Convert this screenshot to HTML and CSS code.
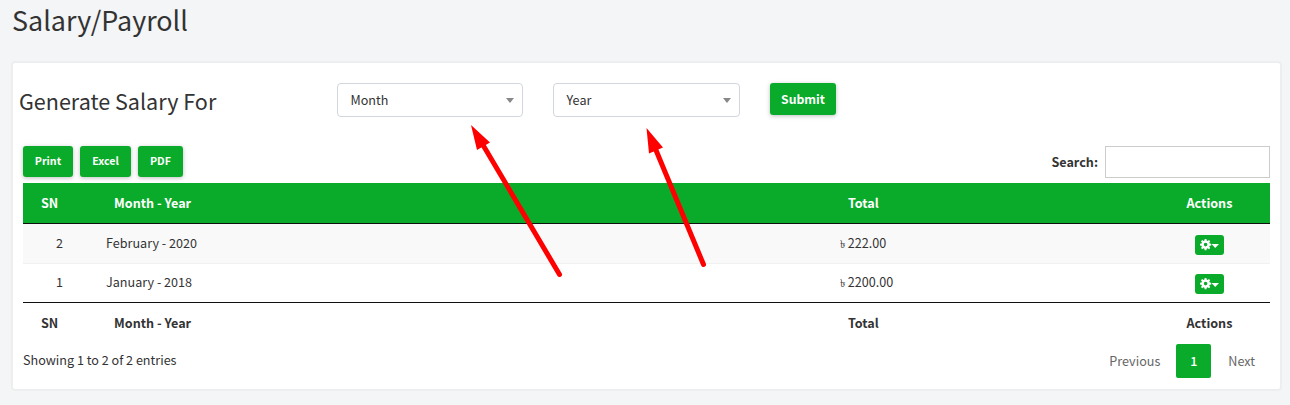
FILE: index.html
```html
<!DOCTYPE html>
<html lang="en">
<head>
<meta charset="utf-8">
<title>Salary/Payroll</title>
<link rel="stylesheet" href="styles.css">
</head>
<body>
<svg class="defs" aria-hidden="true">
  <symbol id="actions" viewBox="0 0 20 12">
    <path fill-rule="evenodd" d="M4.700 0h1.700l.3 1.600 1 .4L9 1.100l1.200 1.200-.9 1.300.4 1 1.500.2v1.700l-1.500.3-.4 1 .9 1.200L9 10.200l-1.300-.9-1 .4-.3 1.500H4.700l-.3-1.500-1-.4-1.200.9L1 9l.9-1.200-.4-1L0 6.500V4.800l1.500-.2.4-1L1 2.300l1.200-1.200 1.200.9 1-.4zM5.600 3.800a1.800 1.800 0 1 0 0 3.600 1.800 1.800 0 1 0 0-3.600z"/>
    <path d="M11.500 5h7.500L15.200 9z"/>
  </symbol>
</svg>
<h1 class="title">Salary/Payroll</h1>
<main class="card">
  <form class="generate">
    <h2 class="subtitle">Generate Salary For</h2>
    <div class="select month"><span>Month</span><i class="arrow"></i></div>
    <div class="select year"><span>Year</span><i class="arrow"></i></div>
    <button class="btn submit" type="button">Submit</button>
  </form>
  <div class="toolbar">
    <button class="btn print">Print</button>
    <button class="btn excel">Excel</button>
    <button class="btn pdf">PDF</button>
    <label class="search"><span>Search:</span><input type="text"></label>
  </div>
  <div class="table">
    <div class="row head"><b>SN</b><b>Month - Year</b><b>Total</b><b>Actions</b></div>
    <div class="row striped"><span class="sn">2</span><span>February - 2020</span><span><span class="taka">৳</span> 222.00</span><span class="act"><button class="gear"><svg><use href="#actions"/></svg></button></span></div>
    <div class="row last"><span class="sn">1</span><span>January - 2018</span><span><span class="taka">৳</span> 2200.00</span><span class="act"><button class="gear"><svg><use href="#actions"/></svg></button></span></div>
    <div class="row foot"><b>SN</b><b>Month - Year</b><b>Total</b><b>Actions</b></div>
  </div>
  <div class="bottom">
    <span class="info">Showing 1 to 2 of 2 entries</span>
    <nav class="pager"><span>Previous</span><span class="current">1</span><span>Next</span></nav>
  </div>
</main>
<svg class="arrows" viewBox="0 0 1290 405" fill="#f00" stroke="#f00" stroke-linecap="round">
  <path d="M559.5 274.5 483 145M703.5 264.5 655.5 149" stroke-width="5"/>
  <path stroke="none" d="M471 125 490 142.500 477 150zM646.500 128 663 147.500 649 153.500z"/>
</svg>
</body>
</html>
```
FILE: styles.css
```css
* { box-sizing: border-box; }
body {
  margin: 0;
  height: 405px;
  overflow: hidden;
  background: #f3f5f7;
  color: #333;
  font: 12.6px/20px "Noto Sans CJK SC", "Noto Sans", sans-serif;
}
.defs { position: absolute; width: 0; height: 0; }
.title {
  margin: 0;
  height: 61px;
  padding: 3px 0 0 12px;
  font-size: 26.9px;
  line-height: 34px;
  font-weight: 400;
}
.card {
  width: 1271px;
  height: 330px;
  margin-left: 11px;
  padding: 20px 10px 0;
  background: #fff;
  border: 2px solid #edeef0;
  border-radius: 4px;
}
.generate { display: flex; height: 63px; }
.subtitle {
  width: 314px;
  margin: 2px 0 0 -4px;
  font-size: 21.55px;
  line-height: 32px;
  font-weight: 400;
}
.select {
  display: flex;
  align-items: center;
  justify-content: space-between;
  height: 34px;
  margin-left: 4px;
  padding: 0 8px 0 12.5px;
  border: 1px solid #d2d6de;
  border-radius: 4px;
}
.month { width: 186px; }
.year { width: 187px; margin-left: 30px; }
.arrow {
  border: 4px solid transparent;
  border-top: 5px solid #888;
  border-bottom: 0;
}
button {
  padding: 0;
  border: 0;
  color: #fff;
  background: #0aab2a;
  font: inherit;
}
.btn {
  border-radius: 3px;
  font-weight: 700;
  font-size: 12.2px;
  box-shadow: 0 1px 4px rgba(0, 0, 0, .25);
}
.submit { width: 66px; height: 32px; margin-left: 30px; }
.toolbar { display: flex; height: 37px; }
.toolbar .btn { height: 31px; padding-bottom: 1px; font-size: 10.7px; }
.print { width: 50px; }
.excel { width: 51px; margin-left: 7px; }
.pdf { width: 45px; margin-left: 7px; }
.search { display: flex; align-items: center; height: 32px; margin-left: auto; gap: 7px; font-weight: 700; }
.search input { width: 165px; height: 32px; border: 1px solid #ccc; }
.row {
  display: grid;
  grid-template-columns: 73px 734px 319px 121px;
  align-items: center;
}
.row > span { padding-left: 10px; }
.row > b { padding-left: 18px; }
.row > b:last-child { padding: 0; text-align: center; }
.row > .sn, .row > .act { padding: 0; text-align: center; }
.head { height: 41px; color: #fff; background: #0aab2a; border-bottom: 1px solid #111; }
.striped { height: 39px; background: #f9f9f9; }
.last { height: 40px; border-top: 1px solid #f1f1f1; border-bottom: 1px solid #111; }
.striped > span { margin-top: -1px; }
.last > span { margin-top: -2px; }
.taka { font-size: 11px; }
.foot { height: 40px; }
.act { display: flex; justify-content: center; }
.gear {
  width: 29px;
  height: 20px;
  margin-top: 4px;
  border-radius: 3px;
  display: flex;
  align-items: center;
  padding-left: 5px;
}
.gear svg { width: 20px; height: 12px; fill: #fff; }
.bottom { display: flex; justify-content: space-between; padding-top: 1px; }
.info { padding-top: 6px; }
.pager { display: flex; line-height: 34px; color: #666; }
.current { width: 35px; margin: 0 17px 0 16px; border-radius: 2px; text-align: center; color: #fff; background: #0aab2a; font-weight: 500; }
.pager span:last-child { padding-right: 15px; }
.arrows { position: absolute; left: 0; top: 0; width: 1290px; height: 405px; pointer-events: none; }
```
